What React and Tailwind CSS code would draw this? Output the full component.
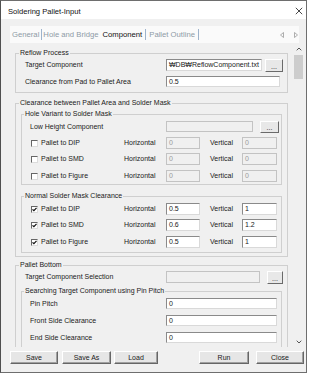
import React from "react";

const FONT = { fontFamily: '"Liberation Sans", Arial, sans-serif' };

function Field({ cls, value, disabled }) {
  return (
    <div
      className={`${cls} shrink-0 border pl-[2px] flex items-center text-[7px] leading-[8px] overflow-hidden whitespace-nowrap ${
        disabled
          ? "bg-[#f0f0f0] text-[#9a9a9a] border-[#c3c3c3]"
          : "bg-white text-[#1a1a1a] border-t-[#8a8a8a] border-l-[#8a8a8a] border-r-[#d9d9d9] border-b-[#d9d9d9]"
      }`}
    >
      {value}
    </div>
  );
}

function Dots({ cls }) {
  return (
    <div
      className={`${cls} shrink-0 bg-[#e8e8e8] border border-t-white border-l-white border-r-[#6a6a6a] border-b-[#6a6a6a] flex items-end justify-center text-[7px] leading-[7px] text-[#222] pb-[1px]`}
    >
      ...
    </div>
  );
}

function Check({ checked }) {
  return (
    <div className="w-[7px] h-[7px] shrink-0 bg-white border border-t-[#666] border-l-[#666] border-r-[#dcdcdc] border-b-[#dcdcdc] flex items-center justify-center">
      {checked && (
        <svg width="5" height="5" viewBox="0 0 5 5">
          <path d="M0.5 2.3 L1.9 3.7 L4.5 0.8" stroke="#111" strokeWidth="1.2" fill="none" />
        </svg>
      )}
    </div>
  );
}

function CRow({ label, checked, hv, vv, disabled, mt }) {
  return (
    <div className={`flex items-center h-[12px] pl-[9px] ${mt}`}>
      <Check checked={checked} />
      <div className="ml-[3px] w-[83px] shrink-0">{label}</div>
      <div className="w-[42px] shrink-0">Horizontal</div>
      <Field cls="w-[34px] h-[12px]" value={hv} disabled={disabled} />
      <div className="ml-[10px] w-[32px] shrink-0">Vertical</div>
      <Field cls="w-[35px] h-[12px]" value={vv} disabled={disabled} />
    </div>
  );
}

function Legend({ children, inner }) {
  return (
    <legend className={`${inner ? "ml-[2px]" : "ml-[3px]"} px-[1px] leading-[8px] text-[7px]`}>
      {children}
    </legend>
  );
}

function Btn({ cls, children }) {
  return (
    <div
      className={`${cls} h-[13px] shrink-0 bg-[#e6e6e6] border border-t-white border-l-white border-r-[#666] border-b-[#666] shadow-[inset_-1px_-1px_0_#a0a0a0] flex items-center justify-center text-[7px] leading-[8px] text-[#1a1a1a]`}
    >
      {children}
    </div>
  );
}

function Sep({ cls }) {
  return <div className={`${cls} w-[1px] h-[11px] bg-[#9db3cc] shrink-0`} />;
}

export default function App() {
  return (
    <div className="w-[311px] h-[376px] bg-white relative overflow-hidden" style={FONT}>
      <div className="w-[307px] h-[373px] border border-[#6e6e6e] border-l-[#505050] bg-[#f0f0f0] flex flex-col text-[#1a1a1a] text-[7px] leading-[8px]">
        {/* Title bar */}
        <div className="h-[18px] bg-white flex items-center pl-[7px] pr-[2px] shrink-0">
          <div className="text-[7.6px] leading-[9px] text-[#111] mt-[2px]">Soldering Pallet-Input</div>
          <svg className="ml-auto mr-[1px] mt-[1px]" width="8" height="8" viewBox="0 0 8 8">
            <path d="M0.8 0.8 L7.2 7.2 M7.2 0.8 L0.8 7.2" stroke="#333" strokeWidth="0.9" />
          </svg>
        </div>

        {/* Tab strip */}
        <div className="mt-[7px] ml-[9px] w-[289px] h-[17px] bg-[#fafafa] flex items-center shrink-0 text-[7.7px] leading-[9px] text-[#8e9aa6]">
          <div className="ml-[2px]">General</div>
          <Sep cls="ml-[2px]" />
          <div className="ml-[1px]">Hole and Bridge</div>
          <div className="ml-[4px] text-[#111]">Component</div>
          <Sep cls="ml-[3px]" />
          <div className="ml-[3px]">Pallet Outline</div>
          <Sep cls="ml-[3px]" />
          <div className="ml-auto flex items-center gap-[10px] mr-[1px]">
            <svg width="4" height="6" viewBox="0 0 4 6">
              <path d="M3.5 0.5 L0.5 3 L3.5 5.5 Z" stroke="#9a9a9a" strokeWidth="0.8" fill="none" />
            </svg>
            <svg width="4" height="6" viewBox="0 0 4 6">
              <path d="M0.5 0.5 L3.5 3 L0.5 5.5 Z" stroke="#9a9a9a" strokeWidth="0.8" fill="none" />
            </svg>
          </div>
        </div>

        {/* Scroll area */}
        <div className="h-[304px] flex shrink-0">
          <div className="pl-[14px] w-[288px] overflow-hidden shrink-0">
            {/* Reflow Process */}
            <fieldset className="mt-[6px] w-[273px] border border-[#cfcfcf] pb-[5px]">
              <Legend>Reflow Process</Legend>
              <div className="pt-[2px] flex items-center h-[14px] pl-[9px]">
                <div className="w-[141px] shrink-0">Target Component</div>
                <Field cls="w-[96px] h-[12px]" value="₩DB₩ReflowComponent.txt" />
                <Dots cls="ml-[3px] w-[18px] h-[13px]" />
              </div>
              <div className="mt-[5px] flex items-center h-[11px] pl-[9px]">
                <div className="w-[141px] shrink-0">Clearance from Pad to Pallet Area</div>
                <Field cls="w-[114px] h-[11px]" value="0.5" />
              </div>
            </fieldset>

            {/* Clearance between Pallet Area and Solder Mask */}
            <fieldset className="mt-[6px] w-[273px] border border-[#cfcfcf] pb-[3px]">
              <Legend>Clearance between Pallet Area and Solder Mask</Legend>
              <div className="px-[5px] pt-[3px]">
                <fieldset className="w-[261px] border border-[#cfcfcf] pb-[2px]">
                  <Legend inner>Hole Variant to Solder Mask</Legend>
                  <div className="pt-[3px] flex items-center h-[14px] pl-[8px]">
                    <div className="w-[136px] shrink-0">Low Height Component</div>
                    <Field cls="w-[87px] h-[11px]" value="" disabled />
                    <Dots cls="ml-[7px] w-[19px] h-[12px]" />
                  </div>
                  <CRow label="Pallet to DIP" hv="0" vv="0" disabled mt="mt-[5px]" />
                  <CRow label="Pallet to SMD" hv="0" vv="0" disabled mt="mt-[4px]" />
                  <CRow label="Pallet to Figure" hv="0" vv="0" disabled mt="mt-[5px]" />
                </fieldset>
                <fieldset className="mt-[7px] w-[261px] border border-[#cfcfcf] pb-[4px]">
                  <Legend inner>Normal Solder Mask Clearance</Legend>
                  <div className="pt-[3px]">
                    <CRow label="Pallet to DIP" checked hv="0.5" vv="1" mt="" />
                    <CRow label="Pallet to SMD" checked hv="0.6" vv="1.2" mt="mt-[4px]" />
                    <CRow label="Pallet to Figure" checked hv="0.5" vv="1" mt="mt-[5px]" />
                  </div>
                </fieldset>
              </div>
            </fieldset>

            {/* Pallet Bottom */}
            <fieldset className="mt-[4px] w-[273px] border border-[#cfcfcf] pb-[10px]">
              <Legend>Pallet Bottom</Legend>
              <div className="pt-[2px] flex items-center h-[14px] pl-[9px]">
                <div className="w-[141px] shrink-0">Target Component Selection</div>
                <Field cls="w-[94px] h-[12px]" value="" disabled />
                <Dots cls="ml-[7px] w-[16px] h-[13px]" />
              </div>
              <div className="px-[5px] mt-[4px]">
                <fieldset className="w-[261px] border border-[#cfcfcf] pb-[10px]">
                  <Legend inner>Searching Target Component using Pin Pitch</Legend>
                  <div className="pt-[3px] flex items-center h-[14px] pl-[8px]">
                    <div className="w-[136px] shrink-0">Pin Pitch</div>
                    <Field cls="w-[111px] h-[11px]" value="0" />
                  </div>
                  <div className="mt-[6px] flex items-center h-[11px] pl-[8px]">
                    <div className="w-[136px] shrink-0">Front Side Clearance</div>
                    <Field cls="w-[111px] h-[11px]" value="0" />
                  </div>
                  <div className="mt-[6px] flex items-center h-[11px] pl-[8px]">
                    <div className="w-[136px] shrink-0">End Side Clearance</div>
                    <Field cls="w-[111px] h-[11px]" value="0" />
                  </div>
                </fieldset>
              </div>
            </fieldset>
          </div>

          {/* Scrollbar */}
          <div className="ml-[4px] w-[11px] flex flex-col items-center shrink-0">
            <div className="h-[12px] flex items-center justify-center">
              <svg width="6" height="4" viewBox="0 0 6 4">
                <path d="M0.7 3.3 L3 1 L5.3 3.3" stroke="#555" strokeWidth="1" fill="none" />
              </svg>
            </div>
            <div className="w-[9px] h-[24px] bg-[#cdcdcd]" />
            <div className="flex-1" />
            <div className="h-[10px] flex items-center justify-center">
              <svg width="6" height="4" viewBox="0 0 6 4">
                <path d="M0.7 0.7 L3 3 L5.3 0.7" stroke="#555" strokeWidth="1" fill="none" />
              </svg>
            </div>
          </div>
        </div>

        {/* Buttons */}
        <div className="mt-[4px] flex items-center pl-[9px] shrink-0">
          <Btn cls="w-[48px]">Save</Btn>
          <Btn cls="ml-[4px] w-[49px]">Save As</Btn>
          <Btn cls="ml-[3px] w-[44px]">Load</Btn>
          <Btn cls="ml-[41px] w-[50px]">Run</Btn>
          <Btn cls="ml-[7px] w-[48px]">Close</Btn>
        </div>
      </div>
    </div>
  );
}
